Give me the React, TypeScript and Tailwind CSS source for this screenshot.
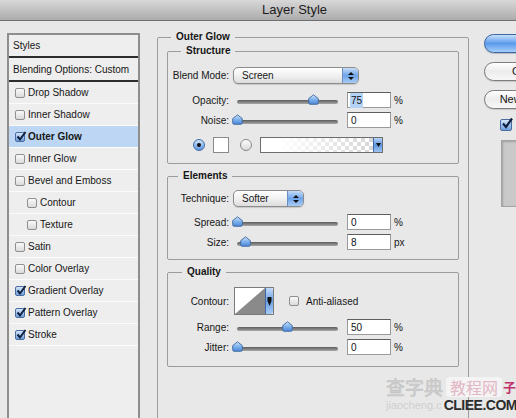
import React from 'react';

const FONT = "font-['Liberation_Sans',Arial,sans-serif]";

function Box({ checked }: { checked?: boolean }) {
  if (checked) {
    return (
      <span className="relative inline-flex h-[10px] w-[10px] shrink-0 items-center justify-center rounded-[2px] border border-[#4b6c9e] bg-linear-to-b from-[#d4e6fb] to-[#6e9fe0]">
        <svg width="11" height="11" viewBox="0 0 11 11" className="absolute -top-[2px] left-0">
          <path d="M1.5 5.5 L4 8.5 L9.5 1" stroke="#11203c" strokeWidth="2" fill="none" />
        </svg>
      </span>
    );
  }
  return (
    <span className="inline-block h-[10px] w-[10px] shrink-0 rounded-[2px] border border-[#8f8f8f] bg-linear-to-b from-[#fafafa] to-[#dadada]" />
  );
}

type StyleRow = { name: string; checked?: boolean; indent?: boolean; selected?: boolean };

const styleRows: StyleRow[] = [
  { name: 'Drop Shadow' },
  { name: 'Inner Shadow' },
  { name: 'Outer Glow', checked: true, selected: true },
  { name: 'Inner Glow' },
  { name: 'Bevel and Emboss' },
  { name: 'Contour', indent: true },
  { name: 'Texture', indent: true },
  { name: 'Satin' },
  { name: 'Color Overlay' },
  { name: 'Gradient Overlay', checked: true },
  { name: 'Pattern Overlay', checked: true },
  { name: 'Stroke', checked: true },
];

function Thumb({ left }: { left: number }) {
  return (
    <svg width="11" height="11" viewBox="0 0 11 11" className="absolute top-[1px]" style={{ left }}>
      <defs>
        <linearGradient id="thumbGrad" x1="0" y1="0" x2="0" y2="1">
          <stop offset="0" stopColor="#cfe3fb" />
          <stop offset="0.5" stopColor="#7fb1ec" />
          <stop offset="1" stopColor="#4a86d6" />
        </linearGradient>
      </defs>
      <path
        d="M5.5 0.8 L10.3 4.6 L10.3 8.8 Q10.3 10.3 8.8 10.3 L2.2 10.3 Q0.7 10.3 0.7 8.8 L0.7 4.6 Z"
        fill="url(#thumbGrad)"
        stroke="#3d689f"
        strokeWidth="0.9"
      />
    </svg>
  );
}

function Slider({ pos }: { pos: number }) {
  return (
    <div className="relative ml-[4px] h-[14px] w-[110px]">
      <div className="absolute left-[4px] top-[7px] h-[4px] w-[101px] rounded-full bg-linear-to-b from-[#5c5c5c] to-[#a8a8a8]" />
      <Thumb left={4 + pos - 5} />
    </div>
  );
}

function NumInput({ value, highlight }: { value: string; highlight?: boolean }) {
  return (
    <div className="ml-[4px] flex h-[16px] w-[44px] items-center border border-[#9a9a9a] border-t-[#5e5e5e] bg-white pl-[2px] text-[10px] text-[#111]">
      <span className={highlight ? 'bg-[#b5d3f7] px-[1px]' : 'px-[1px]'}>{value}</span>
    </div>
  );
}

function Label({ text }: { text: string }) {
  return <span className="flex w-[61px] shrink-0 justify-end whitespace-nowrap text-[10px]">{text}</span>;
}

function SliderRow({ label, pos, value, unit, highlight, className }: { label: string; pos: number; value: string; unit: string; highlight?: boolean; className: string }) {
  return (
    <div className={`flex h-[16px] items-center ${className}`}>
      <Label text={label} />
      <Slider pos={pos} />
      <NumInput value={value} highlight={highlight} />
      <span className="ml-[3px] text-[10px]">{unit}</span>
    </div>
  );
}

function PopUp({ label, width }: { label: string; width: string }) {
  return (
    <div className={`ml-[4px] flex h-[17px] items-center rounded-[5px] border border-[#8c8c8c] bg-linear-to-b from-white via-[#f1f1f1] to-[#dcdcdc] shadow-[0_1px_1px_rgba(0,0,0,0.15)] ${width}`}>
      <span className="flex-1 pl-[8px] text-[10px]">{label}</span>
      <span className="flex h-full w-[16px] flex-col items-center justify-center gap-[2px] rounded-r-[4px] border-l border-[#6c8fc2] bg-linear-to-b from-[#c6dcf8] via-[#6ea4ea] to-[#a9cbf4]">
        <svg width="6" height="3" viewBox="0 0 6 3"><path d="M0 3 L3 0 L6 3 Z" fill="#111" /></svg>
        <svg width="6" height="3" viewBox="0 0 6 3"><path d="M0 0 L3 3 L6 0 Z" fill="#111" /></svg>
      </span>
    </div>
  );
}

function Radio({ on }: { on?: boolean }) {
  return (
    <span className={`flex h-[12px] w-[12px] items-center justify-center rounded-full border ${on ? 'border-[#3e6aa5] bg-linear-to-b from-[#cfe3fb] to-[#5e97e0]' : 'border-[#8a8a8a] bg-linear-to-b from-[#fdfdfd] to-[#d9d9d9]'}`}>
      {on && <span className="h-[4px] w-[4px] rounded-full bg-[#111]" />}
    </span>
  );
}

export default function App() {
  return (
    <div className={`relative h-[418px] w-[516px] overflow-hidden bg-[#e8e8e8] text-[#161616] ${FONT}`}>
      {/* title bar */}
      <div className="h-[21px] border-b border-[#707070] bg-linear-to-b from-[#d8d8d8] to-[#acacac] pl-[262px] text-[13px] leading-[20px] text-[#1c1c1c]">
        Layer Style
      </div>

      <div className="flex">
        {/* styles list */}
        <div className="ml-[7px] mt-[12px] h-[400px] w-[133px] shrink-0 border-2 border-[#8e8e8e] bg-[#eeeeee] text-[10px] whitespace-nowrap">
          <div className="flex h-[23px] items-center border-b-2 border-[#2c2c2c] pl-[4px]">Styles</div>
          <div className="flex h-[24px] items-center border-b-2 border-[#2c2c2c] pl-[4px]">Blending Options: Custom</div>
          {styleRows.map((r) => (
            <div
              key={r.name}
              className={`flex h-[22px] items-center gap-[3px] border-b border-[#fbfbfb] ${r.indent ? 'pl-[18px]' : 'pl-[6px]'} ${r.selected ? 'bg-[#bdd6f4] font-bold' : ''}`}
            >
              <Box checked={r.checked} />
              <span>{r.name}</span>
            </div>
          ))}
        </div>

        {/* main settings */}
        <fieldset className="ml-[17px] mt-[9px] h-[420px] w-[312px] shrink-0 rounded-[2px] border border-[#9c9c9c]">
          <legend className="ml-[13px] px-[5px] text-[10px] font-bold leading-[14px]">Outer Glow</legend>

          <fieldset className="mx-[9px] rounded-[2px] border border-[#9c9c9c] pb-[10px]">
            <legend className="ml-[13px] px-[5px] text-[10px] font-bold leading-[14px]">Structure</legend>
            <div className="mt-[9px] flex items-center">
              <Label text="Blend Mode:" />
              <PopUp label="Screen" width="w-[126px]" />
            </div>
            <SliderRow className="mt-[8px]" label="Opacity:" pos={76} value="75" unit="%" highlight />
            <SliderRow className="mt-[4px]" label="Noise:" pos={0} value="0" unit="%" />
            <div className="mt-[9px] flex h-[16px] items-center">
              <span className="ml-[25px]"><Radio on /></span>
              <span className="ml-[8px] h-[16px] w-[16px] border border-[#8a8a8a] bg-white" />
              <span className="ml-[11px]"><Radio /></span>
              <span className="ml-[8px] flex h-[16px] w-[123px] border border-[#6d6d6d]">
                <span className="flex-1 bg-[linear-gradient(to_right,#ffffff_15%,rgba(255,255,255,0)),repeating-conic-gradient(#d6d6d6_0_25%,#ffffff_0_50%)] bg-[length:100%_100%,8px_8px]" />
                <span className="flex w-[9px] items-center justify-center border-l border-[#3f6aa4] bg-linear-to-b from-[#b8d4f7] via-[#5d96e0] to-[#9fc4f2]">
                  <svg width="5" height="5" viewBox="0 0 5 5"><path d="M0 0 L5 0 L2.5 4 Z" fill="#111" /></svg>
                </span>
              </span>
            </div>
          </fieldset>

          <fieldset className="mx-[9px] mt-[5px] rounded-[2px] border border-[#9c9c9c] pb-[9px]">
            <legend className="ml-[10px] px-[5px] text-[10px] font-bold leading-[14px]">Elements</legend>
            <div className="mt-[7px] flex items-center">
              <Label text="Technique:" />
              <PopUp label="Softer" width="w-[71px]" />
            </div>
            <SliderRow className="mt-[7px]" label="Spread:" pos={0} value="0" unit="%" />
            <SliderRow className="mt-[4px]" label="Size:" pos={8} value="8" unit="px" />
          </fieldset>

          <fieldset className="mx-[9px] mt-[5px] rounded-[2px] border border-[#9c9c9c] pb-[11px]">
            <legend className="ml-[14px] px-[5px] text-[10px] font-bold leading-[14px]">Quality</legend>
            <div className="mt-[8px] flex h-[28px] items-center">
              <Label text="Contour:" />
              <span className="ml-[5px] flex h-[28px] w-[40px] border border-[#7a7a7a] bg-white">
                <svg width="30" height="26" viewBox="0 0 30 26" className="shrink-0">
                  <path d="M0 26 L30 0 L30 26 Z" fill="#8a8a8a" />
                </svg>
                <span className="flex flex-1 items-center justify-center rounded-r-[2px] border-l border-[#3f6aa4] bg-linear-to-b from-[#c3dbf8] via-[#6aa0e6] to-[#a8cbf4]">
                  <svg width="5" height="9" viewBox="0 0 5 9"><path d="M0.5 0 L4.5 0 L4.5 4 L2.5 9 L0.5 4 Z" fill="#111" /></svg>
                </span>
              </span>
              <span className="ml-[15px]"><Box /></span>
              <span className="ml-[7px] text-[10px]">Anti-aliased</span>
            </div>
            <SliderRow className="mt-[4px]" label="Range:" pos={50} value="50" unit="%" />
            <SliderRow className="mt-[4px]" label="Jitter:" pos={0} value="0" unit="%" />
          </fieldset>
        </fieldset>

        {/* buttons */}
        <div className="ml-[15px] mt-[13px] flex w-[90px] shrink-0 flex-col whitespace-nowrap text-[11px]">
          <div className="flex h-[19px] items-center justify-center rounded-full border border-[#3a64a3] bg-linear-to-b from-[#c8e0fb] via-[#5b9aea] to-[#a4d0fa] shadow-[0_1px_1px_rgba(0,0,0,0.2)]">OK</div>
          <div className="mt-[9px] flex h-[19px] items-center justify-center rounded-full border border-[#7c7c7c] bg-linear-to-b from-white via-[#ececec] to-[#f8f8f8] shadow-[0_1px_1px_rgba(0,0,0,0.15)]">Cancel</div>
          <div className="mt-[9px] flex h-[19px] items-center justify-center rounded-full border border-[#7c7c7c] bg-linear-to-b from-white via-[#ececec] to-[#f8f8f8] shadow-[0_1px_1px_rgba(0,0,0,0.15)]">New Style...</div>
          <div className="ml-[16px] mt-[8px] flex items-center gap-[4px]">
            <span className="relative inline-flex h-[12px] w-[12px] items-center justify-center rounded-[2px] border border-[#4b6c9e] bg-linear-to-b from-[#d4e6fb] to-[#6e9fe0]">
              <svg width="13" height="13" viewBox="0 0 13 13" className="absolute -top-[3px] left-0">
                <path d="M2 6.5 L5 10 L11 1.5" stroke="#11203c" strokeWidth="2.2" fill="none" />
              </svg>
            </span>
            <span className="text-[10px]">Preview</span>
          </div>
          <div className="ml-[17px] mt-[8px] h-[67px] w-[60px] border border-[#a4a4a4] bg-[#c9c9c9] shadow-[inset_1px_1px_2px_rgba(0,0,0,0.2)]" />
        </div>
      </div>

      {/* watermark */}
      <div className="pointer-events-none absolute left-[386px] top-[376px] w-[130px] whitespace-nowrap">
        <div className="flex items-center">
          <span className="text-[19px] leading-[22px] text-[#d2d2d2] [-webkit-text-stroke:0.5px_#bdbdbd] font-['Noto_Sans_CJK_SC',sans-serif]">查字典</span>
          <span className="ml-[3px] rounded-[4px] bg-[#f4f4f4] px-[4px] text-[16px] leading-[20px] text-[#e2b6c4] font-['Noto_Sans_CJK_SC',sans-serif]">教程网</span>
          <span className="ml-[1px] text-[13px] font-bold text-[#c0326a] font-['Noto_Sans_CJK_SC',sans-serif]">子</span>
        </div>
        <div className="flex items-center leading-[14px]">
          <span className="text-[11px] text-[#cfcfcf]">jiaocheng.c</span>
          <span className="ml-[2px] text-[14px] font-bold tracking-[-0.5px] text-[#2d2d2d]">CLIEE.COM</span>
        </div>
      </div>
    </div>
  );
}
